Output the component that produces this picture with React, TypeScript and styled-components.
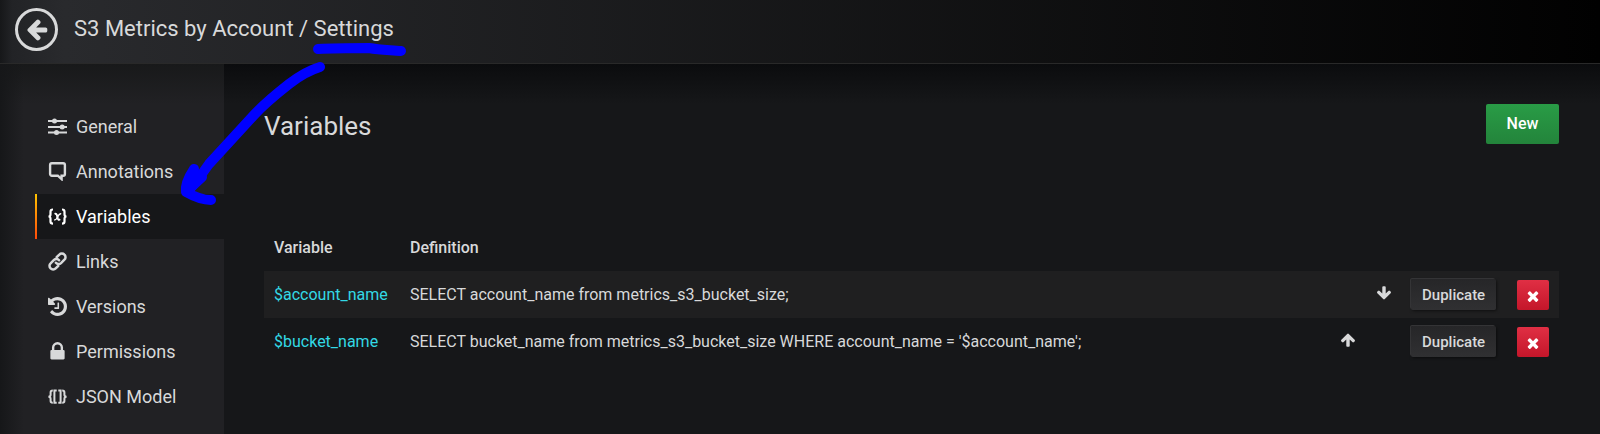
import React from "react";
import styled, { createGlobalStyle } from "styled-components";

const GlobalStyle = createGlobalStyle`
  *, *::before, *::after { box-sizing: border-box; }
  html { background: #161719; }
  body {
    margin: 0;
    background: #161719;
    color: #d8d9da;
    font: 16px/24px Roboto, "Liberation Sans", sans-serif;
  }
  a { text-decoration: none; }
`;

const Page = styled.div`
  position: relative;
  display: flex;
  flex-direction: column;
  min-height: 100vh;
  overflow: hidden;
`;

const Header = styled.header`
  display: flex;
  align-items: center;
  height: 64px;
  padding: 0 15px 4px;
  gap: 16px;
  background: linear-gradient(90deg, #161719 0, #222326 12px, #292a2d 64px, #010101 100%);
  border-bottom: 1px solid #292929;
`;

const BackButton = styled.button`
  display: grid;
  place-items: center;
  width: 43px;
  height: 43px;
  padding: 0;
  border: 3px solid #d8d9da;
  border-radius: 50%;
  background: none;
  color: #d8d9da;
`;

const Title = styled.h1`
  margin: 0;
  padding-bottom: 2px;
  font-size: 22px;
  line-height: 32px;
  font-weight: 400;
`;

const TitleLink = styled.a`
  color: inherit;
`;

const Body = styled.div`
  display: flex;
  flex: 1;
  background: linear-gradient(180deg, #0b0c0e 0, #161719 40px);
`;

const Sidebar = styled.aside`
  flex: 0 0 224px;
  padding: 40px 0 14px 35px;
  background:
    linear-gradient(90deg, #161719 0, transparent 24px),
    linear-gradient(180deg, #18191a 0, #212124 40px);
`;

const NavLink = styled.a<{ $active?: boolean }>`
  display: flex;
  align-items: center;
  gap: 9px;
  height: 45px;
  padding-left: 13px;
  font-size: 18px;
  line-height: 24px;
  color: ${(p) => (p.$active ? "#fff" : "#d8d9da")};
  background: ${(p) =>
    p.$active
      ? "linear-gradient(180deg, #ffc400, #ff4a0a) left / 2px 100% no-repeat, #161719"
      : "none"};
`;

const Content = styled.main`
  flex: 1;
  min-width: 0;
  padding: 40px 41px 48px 40px;
`;

const ContentHeader = styled.div`
  display: flex;
  justify-content: space-between;
  align-items: flex-start;
  margin-bottom: 76px;
`;

const Heading = styled.h2`
  margin: 0;
  font-size: 26px;
  line-height: 44px;
  font-weight: 400;
`;

const Button = styled.button`
  border: 0;
  border-radius: 2px;
  font-family: inherit;
  font-weight: 500;
  white-space: nowrap;
`;

const NewButton = styled(Button)`
  width: 73px;
  height: 40px;
  padding: 0 0 2px;
  font-size: 16px;
  color: #fff;
  background: linear-gradient(180deg, #299c46, #23843b);
`;

const DuplicateButton = styled(Button)`
  height: 31px;
  padding: 0 11px;
  font-size: 15px;
  color: #d8d9da;
  background: linear-gradient(180deg, #262628, #303032);
  box-shadow: -1px -1px 0 0 #343436, 1px 1px 3px rgba(0, 0, 0, 0.5);
`;

const RemoveButton = styled(Button)`
  display: grid;
  place-items: center;
  width: 32px;
  height: 30px;
  padding: 2px 0 0;
  color: #fff;
  background: linear-gradient(180deg, #e02f44, #c4162a);
`;

const MoveButton = styled(Button)`
  display: block;
  padding: 0;
  background: none;
  color: #d8d9da;
`;

const Table = styled.table`
  width: 100%;
  border-collapse: collapse;
  table-layout: fixed;
`;

const HeadCell = styled.th<{ $width?: number }>`
  width: ${(p) => (p.$width ? `${p.$width}px` : "auto")};
  height: 47px;
  padding: 0 10px;
  text-align: left;
  font-weight: 500;
`;

const Row = styled.tr`
  height: 47px;
  &:nth-child(odd) { background: #1f1f20; }
`;

const Cell = styled.td<{ $end?: boolean }>`
  padding: 0 ${(p) => (p.$end ? 0 : 10)}px 0 10px;
  white-space: nowrap;
`;

const VariableLink = styled.a`
  color: #33d9e5;
`;

const Markup = styled.svg`
  position: absolute;
  top: 0;
  left: 0;
  pointer-events: none;
`;

const arrowPath =
  "M1675 832q0 53-37 90l-651 652q-39 37-91 37-53 0-90-37l-651-652q-38-36-38-90 0-53 38-91l74-75q39-37 91-37 53 0 90 37l294 294v-704q0-52 38-90t90-38h128q52 0 90 38t38 90v704l294-294q37-37 90-37 52 0 91 37l75 75q37 39 37 91z";
const closePath =
  "M1490 1322q0 40-28 68l-136 136q-28 28-68 28t-68-28l-294-294-294 294q-28 28-68 28t-68-28l-136-136q-28-28-28-68t28-68l294-294-294-294q-28-28-28-68t28-68l136-136q28-28 68-28t68 28l294 294 294-294q28-28 68-28t68 28l136 136q28 28 28 68t-28 68l-294 294 294 294q28 28 28 68z";
const lockPath =
  "M640 768h512v-192q0-106-75-181t-181-75-181 75-75 181v192zm832 96v576q0 40-28 68t-68 28h-960q-40 0-68-28t-28-68v-576q0-40 28-68t68-28h32v-192q0-184 132-316t316-132 316 132 132 316v192h32q40 0 68 28t28 68z";
const historyPath =
  "M1664 896q0 156-61 298t-164 245-245 164-298 61q-172 0-327-72.5t-264-204.5q-7-10-6.5-22.5t8.5-20.5l137-138q10-9 25-9 16 2 23 12 73 95 179 147t225 52q104 0 198.5-40.5t163.5-109.5 109.5-163.5 40.5-198.5-40.5-198.5-109.5-163.5-163.5-109.5-198.5-40.5q-98 0-188 35.5t-160 101.5l137 138q31 30 14 69-17 40-59 40h-448q-26 0-45-19t-19-45v-448q0-42 40-59 39-17 69 14l130 129q107-101 244.5-156.5t284.5-55.5q156 0 298 61t245 164 164 245 61 298zm-640-288v448q0 14-9 23t-23 9h-320q-14 0-23-9t-9-23v-64q0-14 9-23t23-9h224v-352q0-14 9-23t23-9h64q14 0 23 9t9 23z";

const Arrow = ({ angle = 0, size = 16 }: { angle?: number; size?: number }) => (
  <svg width={size} height={size} viewBox="0 0 1792 1792" fill="currentColor" aria-hidden>
    <path d={arrowPath} transform={`rotate(${angle} 896 896)`} />
  </svg>
);

const NavIcon = ({ children, viewBox = "0 0 19 19" }: { children: React.ReactNode; viewBox?: string }) => (
  <svg width="19" height="19" viewBox={viewBox} fill="none" stroke="currentColor" aria-hidden>
    {children}
  </svg>
);

const navItems = [
  {
    label: "General",
    icon: (
      <NavIcon>
        <path d="M0 4h19M0 10h19M0 15.500h19" strokeWidth="2" />
        <g fill="currentColor" stroke="none">
          <circle cx="6.500" cy="4" r="2.500" />
          <circle cx="14.200" cy="10" r="2.500" />
          <circle cx="8.500" cy="15.500" r="2.500" />
        </g>
      </NavIcon>
    ),
  },
  {
    label: "Annotations",
    icon: (
      <NavIcon>
        <path d="M3.800 1.300h11.400a1.700 1.700 0 0 1 1.700 1.700v9a1.700 1.700 0 0 1-1.700 1.700h-1.600v3.400l-3.800-3.400H3.800a1.700 1.700 0 0 1-1.700-1.700V3a1.700 1.700 0 0 1 1.700-1.700z" strokeWidth="2.400" />
      </NavIcon>
    ),
  },
  {
    label: "Variables",
    active: true,
    icon: (
      <NavIcon>
        <path d="M5 2.500c-2 0-2.500.8-2.500 2.200v2.500c0 1.400-.5 2.300-2 2.300 1.500 0 2 .9 2 2.300v2.700c0 1.400.5 2.200 2.500 2.200M14 2.500c2 0 2.500.8 2.500 2.200v2.500c0 1.400.5 2.300 2 2.300-1.500 0-2 .9-2 2.300v2.700c0 1.400-.5 2.200-2.500 2.200" strokeWidth="2.200" />
        <path d="M6.600 7c1.500-.7 2.100 0 2.500 1.700l.6 2.600c.4 1.500 1.100 2 2.500 1" strokeWidth="2" />
        <path d="M13.200 6.800c-1.500-.4-2.400.6-3.500 2.900s-1.900 3.500-3.600 3.100" strokeWidth="1.300" />
      </NavIcon>
    ),
  },
  {
    label: "Links",
    icon: (
      <NavIcon>
        <g strokeWidth="2.500" strokeLinecap="round">
          <path d="M8.700 5.200l2.600-2.600a3.500 3.500 0 0 1 5.100 0 3.500 3.500 0 0 1 0 5.100l-3.400 3.400a3.500 3.500 0 0 1-5.100-.3" />
          <path d="M10.300 13.800l-2.600 2.600a3.500 3.500 0 0 1-5.100 0 3.500 3.500 0 0 1 0-5.100l3.400-3.400a3.500 3.500 0 0 1 5.100.3" />
        </g>
      </NavIcon>
    ),
  },
  {
    label: "Versions",
    icon: (
      <NavIcon viewBox="128 128 1536 1536">
        <path d={historyPath} fill="currentColor" stroke="none" />
      </NavIcon>
    ),
  },
  {
    label: "Permissions",
    icon: (
      <NavIcon viewBox="128 128 1536 1536">
        <path d={lockPath} fill="currentColor" stroke="none" />
      </NavIcon>
    ),
  },
  {
    label: "JSON Model",
    icon: (
      <NavIcon>
        <path d="M4.800 3.600c-1.600 0-2.200.6-2.200 1.800v2.300c0 1.200-.5 2-2.200 2 1.700 0 2.200.8 2.200 2V14c0 1.200.6 1.800 2.200 1.800M14.200 3.600c1.600 0 2.200.6 2.200 1.800v2.300c0 1.200.5 2 2.200 2-1.700 0-2.200.8-2.200 2V14c0 1.200-.6 1.800-2.200 1.800" strokeWidth="2" />
        <path d="M8.700 3.600H6.400v12.200h2.300M10.300 3.600h2.300v12.200h-2.300" strokeWidth="2" />
      </NavIcon>
    ),
  },
];

const variables = [
  { name: "$account_name", query: "SELECT account_name from metrics_s3_bucket_size;" },
  {
    name: "$bucket_name",
    query: "SELECT bucket_name from metrics_s3_bucket_size WHERE account_name = '$account_name';",
  },
];

export default function App() {
  return (
    <Page>
      <GlobalStyle />
      <Header>
        <BackButton aria-label="Back">
          <Arrow angle={90} size={24} />
        </BackButton>
        <Title>
          <TitleLink href="#dashboard">S3 Metrics by Account</TitleLink> / Settings
        </Title>
      </Header>
      <Body>
        <Sidebar>
          <nav aria-label="Settings">
            {navItems.map((item) => (
              <NavLink key={item.label} href="#settings" $active={item.active}>
                {item.icon}
                {item.label}
              </NavLink>
            ))}
          </nav>
        </Sidebar>
        <Content>
          <ContentHeader>
            <Heading>Variables</Heading>
            <NewButton>New</NewButton>
          </ContentHeader>
          <Table>
            <thead>
              <tr>
                <HeadCell $width={136}>Variable</HeadCell>
                <HeadCell>Definition</HeadCell>
                <HeadCell $width={36} aria-label="Move up" />
                <HeadCell $width={35} aria-label="Move down" />
                <HeadCell $width={106} aria-label="Duplicate" />
                <HeadCell $width={52} aria-label="Remove" />
              </tr>
            </thead>
            <tbody>
              {variables.map((v, i) => (
                <Row key={v.name}>
                  <Cell>
                    <VariableLink href="#variable">{v.name}</VariableLink>
                  </Cell>
                  <Cell>{v.query}</Cell>
                  <Cell $end>
                    {i > 0 && (
                      <MoveButton aria-label="Move up">
                        <Arrow angle={180} />
                      </MoveButton>
                    )}
                  </Cell>
                  <Cell $end>
                    {i < variables.length - 1 && (
                      <MoveButton aria-label="Move down">
                        <Arrow />
                      </MoveButton>
                    )}
                  </Cell>
                  <Cell>
                    <DuplicateButton>Duplicate</DuplicateButton>
                  </Cell>
                  <Cell>
                    <RemoveButton aria-label="Remove">
                      <svg width="16" height="16" viewBox="0 0 1792 1792" fill="currentColor" aria-hidden>
                        <path d={closePath} />
                      </svg>
                    </RemoveButton>
                  </Cell>
                </Row>
              ))}
            </tbody>
          </Table>
        </Content>
      </Body>
      <Markup width="420" height="220" fill="none" stroke="#0000ff" strokeWidth="10" strokeLinecap="round" strokeLinejoin="round" aria-hidden>
        <path d="M318 49C335 48 353 48 369 48C380 50 391 50 401 51" />
        <path d="M320 67C307 71 298 77 289 84C275 95 265 103 254 115L209 164C202 174 194 185 187 192" />
        <path d="M194 169C188 178 185 186 186 192C193 196 201 200 211 200" />
        <path d="M194 172L188 190L202 177" />
      </Markup>
    </Page>
  );
}
